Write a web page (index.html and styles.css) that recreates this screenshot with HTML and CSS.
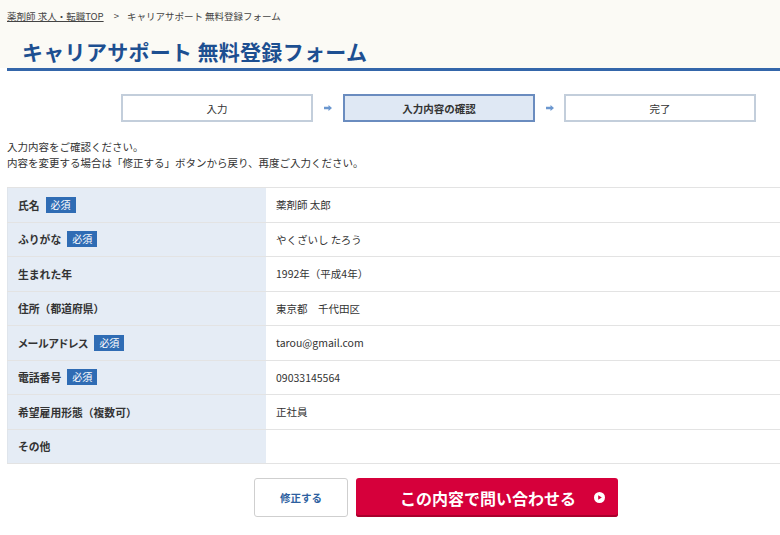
FILE: index.html
```html
<!DOCTYPE html>
<html lang="ja">
<head>
<meta charset="utf-8">
<title>キャリアサポート 無料登録フォーム</title>
<link rel="stylesheet" href="styles.css">
</head>
<body>
<header class="header">
  <div class="breadcrumb"><a href="#">薬剤師 求人・転職TOP</a><span class="sep">&gt;</span><span>キャリアサポート 無料登録フォーム</span></div>
  <h1 class="title">キャリアサポート 無料登録フォーム</h1>
</header>

<div class="steps">
  <div class="step">入力</div>
  <div class="arrow"><svg width="8" height="6" viewBox="0 0 8 6"><path d="M0 1.8h4.5V0L8 3 4.5 6V4.2H0z" fill="#6b97cf"/></svg></div>
  <div class="step active">入力内容の確認</div>
  <div class="arrow"><svg width="8" height="6" viewBox="0 0 8 6"><path d="M0 1.8h4.5V0L8 3 4.5 6V4.2H0z" fill="#6b97cf"/></svg></div>
  <div class="step">完了</div>
</div>

<p class="lead">入力内容をご確認ください。<br>内容を変更する場合は「修正する」ボタンから戻り、再度ご入力ください。</p>

<div class="table">
  <div class="row"><div class="label">氏名<span class="req">必須</span></div><div class="value">薬剤師 太郎</div></div>
  <div class="row"><div class="label">ふりがな<span class="req">必須</span></div><div class="value">やくざいし たろう</div></div>
  <div class="row"><div class="label">生まれた年</div><div class="value">1992年（平成4年）</div></div>
  <div class="row"><div class="label">住所（都道府県）</div><div class="value">東京都　千代田区</div></div>
  <div class="row"><div class="label"><span class="kana">メールアドレス</span><span class="req">必須</span></div><div class="value">tarou@gmail.com</div></div>
  <div class="row"><div class="label">電話番号<span class="req">必須</span></div><div class="value">09033145564</div></div>
  <div class="row"><div class="label">希望雇用形態（複数可）</div><div class="value">正社員</div></div>
  <div class="row"><div class="label">その他</div><div class="value"></div></div>
</div>

<div class="buttons">
  <button class="btn-back">修正する</button>
  <button class="btn-submit"><span>この内容で問い合わせる</span><svg class="play" width="11" height="11" viewBox="0 0 11 11"><circle cx="5.5" cy="5.5" r="5.5" fill="#fff"/><path d="M4.2 3.2L7.8 5.5 4.2 7.8z" fill="#d4003a"/></svg></button>
</div>
</body>
</html>
```

FILE: styles.css
```css
* { box-sizing: border-box; }
body {
  margin: 0;
  background: #fff;
  color: #333;
  font-family: "Noto Sans CJK JP", "Noto Sans", sans-serif;
  font-size: 10.5px;
  width: 780px;
  overflow: hidden;
}
.header {
  background: #fbfaf5;
  height: 71px;
  margin-left: 7px;
  border-bottom: 3px solid #3466aa;
  position: relative;
}
.header::before {
  content: "";
  position: absolute;
  left: -7px; top: 0;
  width: 7px; height: 68px;
  background: #fbfaf5;
}
.breadcrumb {
  padding-top: 9px;
  font-size: 9.5px;
  line-height: 14px;
  color: #444;
}
.breadcrumb a { color: #444; text-decoration: underline; }
.breadcrumb .sep { margin: 0 8px 0 10px; }
.title {
  margin: 16px 0 0 15px;
  font-size: 21px;
  line-height: 24px;
  font-weight: 700;
  color: #1d4f91;
  letter-spacing: 0.3px;
}
.steps {
  display: grid;
  grid-template-columns: 192px 30px 192px 29px 192px;
  margin: 23px 0 0 121px;
}
.step {
  height: 28px;
  border: 2px solid #c3cedb;
  background: #fff;
  display: flex;
  align-items: center;
  justify-content: center;
  font-size: 10.5px;
  color: #333;
}
.step.active {
  background: #dfe8f4;
  border-color: #6a8cbf;
  font-weight: 700;
}
.arrow {
  display: flex;
  align-items: center;
  justify-content: center;
}
.lead {
  margin: 17px 0 0 7px;
  line-height: 16px;
  font-size: 10.5px;
  color: #333;
}
.table {
  margin: 16px 0 0 7px;
  border-top: 1px solid #e3e3e3;
}
.row {
  display: grid;
  grid-template-columns: 259px 1fr;
  height: 34.5px;
  border-bottom: 1px solid #e3e3e3;
}
.label {
  background: #e5ecf5;
  border-left: 1px solid #dfe5ec;
  display: flex;
  align-items: center;
  padding-left: 10px;
  font-weight: 700;
  color: #333;
  font-size: 10.8px;
}
.kana { font-feature-settings: "palt"; }
.req {
  display: inline-block;
  background: #2f6cb4;
  color: #fff;
  font-size: 10px;
  font-weight: 400;
  line-height: 16px;
  padding: 0 5px;
  margin-left: 6px;
}
.value {
  display: flex;
  align-items: center;
  padding-left: 10px;
  color: #333;
}
.buttons {
  display: flex;
  gap: 8px;
  margin: 14px 0 0 254px;
}
.btn-back {
  width: 94px;
  height: 39px;
  background: #fff;
  border: 1px solid #cfcfcf;
  border-radius: 3px;
  color: #2d5f9f;
  font-family: inherit;
  font-weight: 700;
  font-size: 10.5px;
}
.btn-submit {
  width: 262px;
  height: 39px;
  background: #d6003b;
  border: none;
  border-radius: 3px;
  box-shadow: inset 0 -2px 0 #a8002c;
  color: #fff;
  font-family: inherit;
  font-weight: 700;
  font-size: 16px;
  display: flex;
  align-items: center;
  padding: 0 13px 0 44px;
}
.btn-submit span { flex: 1; text-align: left; }
.play { flex: none; }
```
